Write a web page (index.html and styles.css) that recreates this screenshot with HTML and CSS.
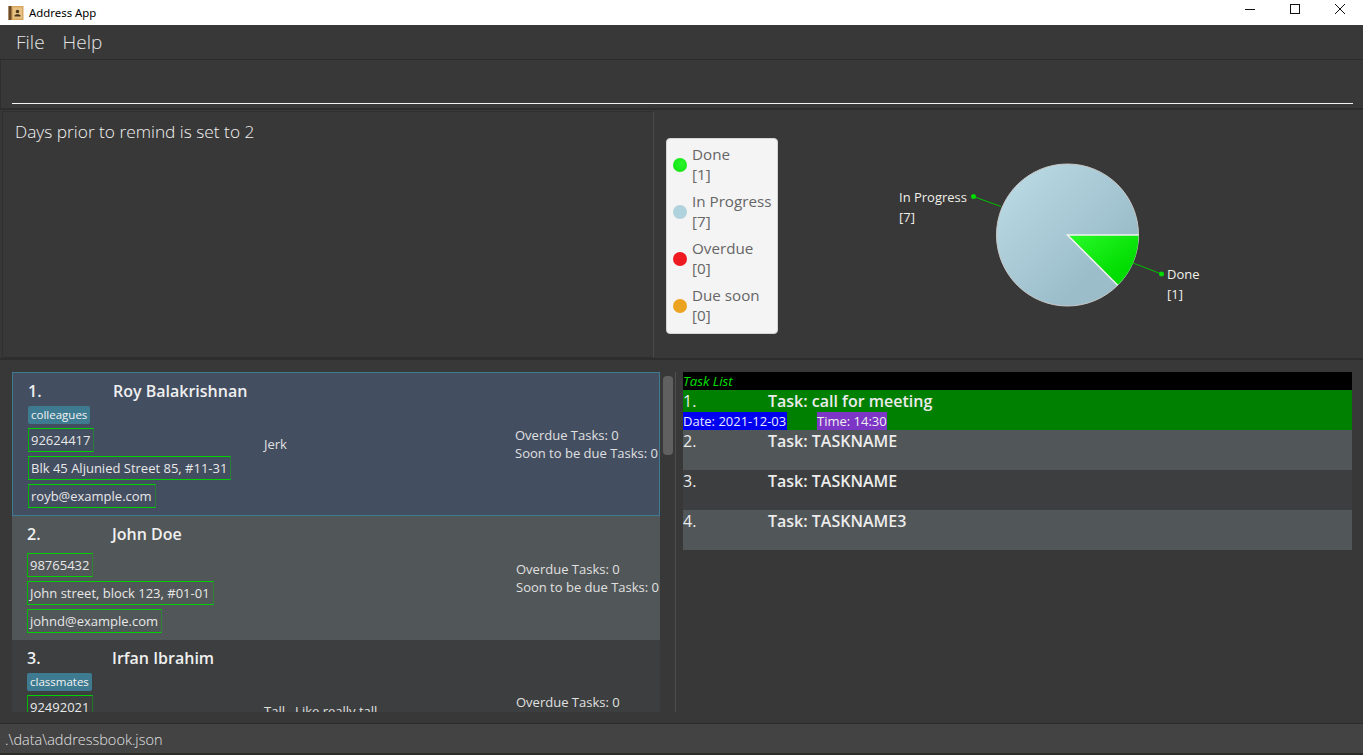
FILE: index.html
```html
<!DOCTYPE html>
<html lang="en">
<head>
<meta charset="utf-8">
<title>Address App</title>
<link rel="stylesheet" href="styles.css">
</head>
<body>
<div class="app">
  <header class="titlebar">
    <svg class="appicon" width="16" height="16" viewBox="0 0 16 16"><rect x="0.5" y="1" width="15" height="14" fill="#d9a860"/><rect x="0.5" y="1" width="3" height="14" fill="#6b4a2a"/><rect x="5" y="2.5" width="9" height="11" fill="#e7c184"/><circle cx="9.5" cy="6.5" r="1.7" fill="#4a3418"/><path d="M6.5 11.5h6v-1.2l-2-1h-2l-2 1z" fill="#4a3418"/></svg>
    <span class="apptitle">Address App</span>
    <div class="winbtns">
      <svg width="12" height="12" viewBox="0 0 12 12"><path d="M1 6.500h10" stroke="#111" stroke-width="1"/></svg>
      <svg width="12" height="12" viewBox="0 0 12 12"><rect x="1.500" y="1.500" width="9" height="9" fill="none" stroke="#111"/></svg>
      <svg width="12" height="12" viewBox="0 0 12 12"><path d="M1 1l10 10M11 1L1 11" stroke="#111" stroke-width="1"/></svg>
    </div>
  </header>
  <nav class="menubar"><span>File</span><span>Help</span></nav>
  <section class="commandbox"><div class="commandline"></div></section>
  <section class="toprow">
    <div class="resultbox">Days prior to remind is set to 2</div>
    <div class="chartpane">
      <div class="legend">
        <div class="legenditem"><i class="dot dot-done"></i><span>Done<br>[1]</span></div>
        <div class="legenditem"><i class="dot dot-progress"></i><span>In Progress<br>[7]</span></div>
        <div class="legenditem"><i class="dot dot-overdue"></i><span>Overdue<br>[0]</span></div>
        <div class="legenditem"><i class="dot dot-soon"></i><span>Due soon<br>[0]</span></div>
      </div>
      <div class="chart">
        <svg class="pie" width="340" height="170" viewBox="0 0 340 170">
          <defs>
            <linearGradient id="gp" x1="0.1" y1="0.1" x2="0.72" y2="0.72"><stop offset="0" stop-color="#b9d9e3"/><stop offset="1" stop-color="#9bbdca"/></linearGradient>
            <linearGradient id="gd" x1="0" y1="0" x2="1" y2="1"><stop offset="0" stop-color="#2afa2a"/><stop offset="0.75" stop-color="#00dc00"/></linearGradient>
          </defs>
          <path d="M93.500 46.500 L121 56.500" stroke="#00c000" stroke-width="1" fill="none"/>
          <circle cx="93.500" cy="46.500" r="2.500" fill="#00d800"/>
          <path d="M253 113 L281.500 124" stroke="#00c000" stroke-width="1" fill="none"/>
          <circle cx="281.500" cy="124" r="2.500" fill="#00d800"/>
          <circle cx="187.500" cy="85" r="71" fill="url(#gp)" stroke="#c8c8c8" stroke-width="1"/>
          <path d="M187.500 85 L258.500 85 A71 71 0 0 1 237.700 135.200 Z" fill="url(#gd)"/>
          <path d="M258.500 85 L187.500 85 L237.700 135.200" fill="none" stroke="#f2f4f2" stroke-width="1.500"/>
        </svg>
        <div class="pielabel label-progress">In Progress<br>[7]</div>
        <div class="pielabel label-done">Done<br>[1]</div>
      </div>
    </div>
  </section>
  <section class="bottomrow">
    <div class="personpane">
      <div class="personlist">
        <article class="person selected">
          <div class="pmain">
            <div class="pname"><b class="pidx">1.</b><b>Roy Balakrishnan</b></div>
            <div class="tag">colleagues</div>
            <div class="field">92624417</div>
            <div class="field">Blk 45 Aljunied Street 85, #11-31</div>
            <div class="field">royb@example.com</div>
          </div>
          <div class="remark">Jerk</div>
          <div class="stats">Overdue Tasks: 0<br>Soon to be due Tasks: 0</div>
        </article>
        <article class="person even second">
          <div class="pmain">
            <div class="pname"><b class="pidx">2.</b><b>John Doe</b></div>
            <div class="field">98765432</div>
            <div class="field">John street, block 123, #01-01</div>
            <div class="field">johnd@example.com</div>
          </div>
          <div class="remark"></div>
          <div class="stats">Overdue Tasks: 0<br>Soon to be due Tasks: 0</div>
        </article>
        <article class="person third">
          <div class="pmain">
            <div class="pname"><b class="pidx">3.</b><b>Irfan Ibrahim</b></div>
            <div class="tag">classmates</div>
            <div class="field">92492021</div>
          </div>
          <div class="remark">Tall . Like really tall</div>
          <div class="stats">Overdue Tasks: 0</div>
        </article>
      </div>
      <div class="scrolltrack"><div class="scrollthumb"></div></div>
    </div>
    <div class="taskpane">
      <div class="tasklist">
        <div class="taskhead">Task List</div>
        <div class="task task-active">
          <div class="taskline"><span class="tidx">1.</span><span class="tname">Task: call for meeting</span></div>
          <div class="taskmeta"><span class="date">Date: 2021-12-03</span><span class="time">Time: 14:30</span></div>
        </div>
        <div class="task task-even"><div class="taskline"><span class="tidx">2.</span><span class="tname">Task: TASKNAME</span></div></div>
        <div class="task task-odd"><div class="taskline"><span class="tidx">3.</span><span class="tname">Task: TASKNAME</span></div></div>
        <div class="task task-even"><div class="taskline"><span class="tidx">4.</span><span class="tname">Task: TASKNAME3</span></div></div>
      </div>
    </div>
  </section>
  <footer class="status">.\data\addressbook.json</footer>
</div>
</body>
</html>
```
FILE: styles.css
```css
* { box-sizing: border-box; }
html, body { margin: 0; padding: 0; height: 100%; overflow: hidden; }
body { font-family: "Open Sans", "Noto Sans", sans-serif; background: #383838; color: #fff; }
.app { width: 1363px; height: 755px; display: flex; flex-direction: column; background: #383838; }

.titlebar { height: 25px; flex: none; background: #fff; display: flex; align-items: center; padding-left: 8px; color: #000; }
.appicon { flex: none; margin-right: 5px; }
.apptitle { font-family: "Noto Sans", "Open Sans", sans-serif; font-size: 11.400px; }
.winbtns { margin-left: auto; align-self: flex-start; display: flex; gap: 33px; padding: 3px 17px 0 0; }
.winbtns svg { display: block; }

.menubar { height: 35px; flex: none; display: flex; gap: 18px; padding: 0 0 1px 16px; align-items: center; font-size: 19px; font-weight: 300; color: #e4e4e4; border-bottom: 1px solid #2b2b2b; }
.commandbox { height: 50px; flex: none; padding: 43px 10px 0 11px; border-left: 1px solid #2f2f2f; border-bottom: 2px solid #2d2d2d; }
.commandline { height: 1px; background: #f4f4f4; }

.toprow { height: 250px; flex: none; display: flex; border-bottom: 2px solid #2d2d2d; padding: 1px 0 0 2px; }
.resultbox { width: 652px; flex: none; border: 1px solid #2f2f2f; border-right-color: #4a4a4a; padding: 9px 12px; font-size: 17.300px; line-height: 22px; font-weight: 300; color: #f2f2f2; }
.chartpane { flex: 1; position: relative; }
.legend { position: absolute; left: 12px; top: 27px; width: 112px; height: 196px; background: #f4f4f4; border: 1px solid #d4d4d4; border-radius: 4px; padding: 1px 0 0 6px; color: #666; font-size: 15.200px; line-height: 20px; }
.legenditem { display: flex; align-items: center; gap: 5px; height: 47px; white-space: nowrap; }
.legenditem span { display: block; }
.dot { width: 14px; height: 14px; border-radius: 50%; flex: none; margin-top: 2px; }
.dot-done { background: radial-gradient(circle at 60% 40%, #29f529, #0ddf0d); }
.dot-progress { background: #b0d2dd; }
.dot-overdue { background: #ef1a1f; }
.dot-soon { background: #eca31f; }
.chart { position: absolute; left: 226px; top: 39px; width: 340px; height: 170px; }
.pie { display: block; }
.pielabel { position: absolute; font-size: 13px; line-height: 20px; color: #f0f0e8; }
.label-progress { left: 19px; top: 37px; }
.label-done { left: 287px; top: 114px; }

.bottomrow { height: 340px; flex: none; margin-top: 12px; display: flex; }
.personpane { width: 676px; flex: none; padding-left: 12px; display: flex; border-right: 1px solid #4e4e4e; }
.personlist { width: 648px; flex: none; height: 340px; overflow: hidden; background: #3c3e3f; }
.scrolltrack { flex: 1; padding: 4px 2px 0 3px; }
.scrollthumb { width: 10px; height: 79px; background: #606060; border-radius: 4px; }

.person { display: grid; grid-template-columns: 237px 252px 1fr; color: #e6e6e6; padding-left: 15px; }
.person.selected { height: 144px; background: #434e60; border: 1px solid #3e7b91; grid-template-columns: 236px 251px 1fr; }
.person.even { height: 124px; background: #515658; }
.person.third { height: 72px; overflow: hidden; }
.pmain { min-width: 0; }
.pname { display: flex; font-size: 16px; line-height: 22px; padding-top: 7px; height: 33px; color: #f0f0f0; font-weight: 600; }
.pname b { font-weight: 600; white-space: nowrap; }
.pidx { width: 85px; flex: none; }
.tag { width: fit-content; background: #3e7b91; color: #f2f2f2; font-size: 11.500px; line-height: 17px; height: 18px; padding: 0 3px; border-radius: 2px; margin-bottom: 4px; }
.field { width: fit-content; font-size: 13px; line-height: 20px; height: 24px; padding: 1px 3px 1px 2px; border: 1px solid #00d000; border-left-color: #00b800; border-right-color: rgba(0, 200, 0, 0.4); color: #e8e8e8; margin-bottom: 4px; white-space: nowrap; }
.second .pname { height: 37px; }
.remark { font-size: 13px; align-self: start; padding-top: 62px; color: #e0e0e0; white-space: nowrap; }
.stats { font-size: 13px; line-height: 18px; padding-top: 53px; color: #e0e0e0; white-space: nowrap; }
.second .stats { padding-top: 44px; }
.third .stats { padding-top: 53px; }
.third .remark { padding-top: 62px; }

.taskpane { flex: 1; padding-left: 7px; padding-right: 11px; }
.tasklist { display: flex; flex-direction: column; }
.taskhead { height: 18px; background: #000; color: #00e000; font-style: italic; font-weight: 500; font-size: 13.300px; line-height: 19px; }
.task { height: 40px; }
.task-active { background: #008000; }
.task-even { background: #515658; }
.task-odd { background: #3c3e3f; }
.taskline { display: flex; font-size: 16px; line-height: 22px; height: 22px; color: #ececec; }
.tidx { width: 85px; flex: none; font-weight: 500; }
.tname { font-weight: 600; }
.taskmeta { display: flex; font-size: 13px; line-height: 18px; height: 18px; }
.date { background: #0000f0; width: 104px; color: #e8e8ff; white-space: nowrap; overflow: hidden; }
.time { background: #7d35c6; margin-left: 30px; width: 70px; color: #eee; white-space: nowrap; }

.status { height: 32px; flex: none; margin-top: 11px; background: #434343; border-top: 1px solid #2b2b2b; border-bottom: 2px solid #2c2c28; font-size: 14.500px; line-height: 31px; font-weight: 300; padding-left: 5px; color: #e2e2e2; white-space: nowrap; }
```
